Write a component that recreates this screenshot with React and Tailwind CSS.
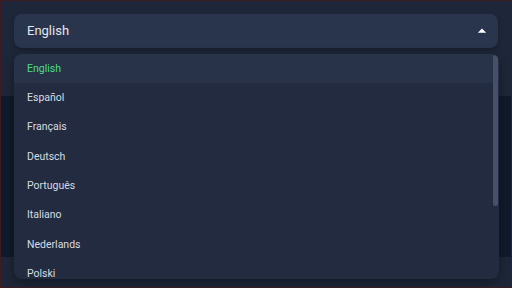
import { useState } from "react";

const languages = [
  "English",
  "Español",
  "Français",
  "Deutsch",
  "Português",
  "Italiano",
  "Nederlands",
  "Polski",
];

const App = () => {
  const [selected] = useState("English");

  return (
    <div
      className="relative w-[512px] h-[288px] overflow-hidden bg-[#1e2739] border border-[#3a1c22]"
      style={{ fontFamily: "Roboto, 'Noto Sans', sans-serif" }}
    >
      {/* select trigger */}
      <div className="px-[13px] pt-[13px]">
        <button className="flex w-full h-[34px] items-center justify-between rounded-lg bg-[#29344d] pl-[13px] pr-[6px] text-[13px] text-[#e5e7eb] shadow-[0_2px_4px_rgba(0,0,0,0.25)]">
          <span>{selected}</span>
          <svg width="20" height="20" viewBox="0 0 24 24" className="text-white">
            <path d="M7 14l5-5 5 5z" fill="currentColor" />
          </svg>
        </button>
      </div>

      {/* page content behind the menu */}
      <div className="mt-[48px] h-[161px] bg-[#111a2c]"></div>

      {/* dropdown menu */}
      <div className="absolute left-[13px] top-[53px] w-[485px] h-[225px] overflow-hidden rounded-lg bg-[#222b40] shadow-[0_4px_12px_rgba(0,0,0,0.35)]">
        <ul className="flex flex-col">
          {languages.map((lang) => (
            <li
              key={lang}
              className={`flex h-[29.3px] shrink-0 items-center pl-[13px] text-[10.5px] ${
                lang === selected ? "bg-[#283249] text-[#4ade80]" : "text-[#d7dbe2]"
              }`}
            >
              {lang}
            </li>
          ))}
        </ul>
        <div className="absolute right-[1px] top-[1px] w-[5px] h-[151px] rounded-full bg-[#465066]"></div>
      </div>
    </div>
  );
};

export default App;
